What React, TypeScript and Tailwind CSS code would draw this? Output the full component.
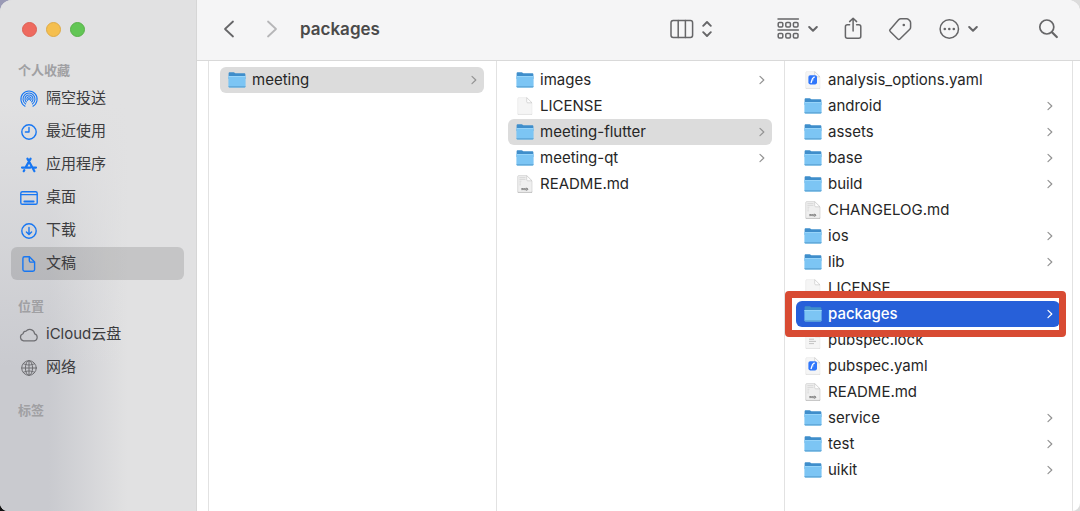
import type { ReactNode } from "react";
import clsx from "clsx";

type EntryKind = "folder" | "blank" | "markdown" | "dart" | "lock";

type Entry = {
  name: string;
  kind: EntryKind;
  state?: "path" | "active";
};

type Place = {
  label: string;
  icon: ReactNode;
  current?: boolean;
};

const COLUMNS: { label: string; entries: Entry[] }[] = [
  { label: "workspace", entries: [{ name: "meeting", kind: "folder", state: "path" }] },
  {
    label: "meeting",
    entries: [
      { name: "images", kind: "folder" },
      { name: "LICENSE", kind: "blank" },
      { name: "meeting-flutter", kind: "folder", state: "path" },
      { name: "meeting-qt", kind: "folder" },
      { name: "README.md", kind: "markdown" },
    ],
  },
  {
    label: "meeting-flutter",
    entries: [
      { name: "analysis_options.yaml", kind: "dart" },
      { name: "android", kind: "folder" },
      { name: "assets", kind: "folder" },
      { name: "base", kind: "folder" },
      { name: "build", kind: "folder" },
      { name: "CHANGELOG.md", kind: "markdown" },
      { name: "ios", kind: "folder" },
      { name: "lib", kind: "folder" },
      { name: "LICENSE", kind: "blank" },
      { name: "packages", kind: "folder", state: "active" },
      { name: "pubspec.lock", kind: "lock" },
      { name: "pubspec.yaml", kind: "dart" },
      { name: "README.md", kind: "markdown" },
      { name: "service", kind: "folder" },
      { name: "test", kind: "folder" },
      { name: "uikit", kind: "folder" },
    ],
  },
];

function Glyph({
  children,
  width = 20,
  height = 20,
  stroke = 1.4,
  className,
}: {
  children: ReactNode;
  width?: number;
  height?: number;
  stroke?: number;
  className?: string;
}) {
  return (
    <svg
      width={width}
      height={height}
      viewBox={`0 0 ${width} ${height}`}
      fill="none"
      stroke="currentColor"
      strokeWidth={stroke}
      strokeLinecap="round"
      strokeLinejoin="round"
      className={clsx("shrink-0", className)}
      aria-hidden="true"
    >
      {children}
    </svg>
  );
}

const FAVORITES: Place[] = [
  {
    label: "隔空投送",
    icon: (
      <Glyph stroke={1.1}>
        <path d="M6 17.2a8.1 8.1 0 1 1 8 0" />
        <path d="M6.6 15a6 6 0 1 1 6.8 0" />
        <path d="M7.4 13a4 4 0 1 1 5.2 0" />
        <path d="M8.6 11.4a2.1 2.1 0 1 1 2.8 0" />
        <circle cx="10" cy="10" r="1" fill="currentColor" stroke="none" />
      </Glyph>
    ),
  },
  {
    label: "最近使用",
    icon: (
      <Glyph>
        <circle cx="10" cy="10" r="7.2" />
        <path d="M10 5.4V10H6.4" />
      </Glyph>
    ),
  },
  {
    label: "应用程序",
    icon: (
      <Glyph stroke={2.2}>
        <path d="M8.4 3.6l5.8 10.4 1.2 2.2M11.6 3.6L6.7 12.4M3 12.6h8.4M14 12.6h3M4.7 16.2l.6-1.1" />
      </Glyph>
    ),
  },
  {
    label: "桌面",
    icon: (
      <Glyph>
        <rect x="1.8" y="3.7" width="16.4" height="12.6" rx="1.6" />
        <path d="M2 6.6h16" strokeWidth="1.1" />
        <path d="M5.4 13.6h9.2" strokeWidth="2" />
      </Glyph>
    ),
  },
  {
    label: "下载",
    icon: (
      <Glyph>
        <circle cx="10" cy="10" r="7.2" />
        <path d="M10 6.4v7M7.4 11l2.6 2.6 2.6-2.6" />
      </Glyph>
    ),
  },
  {
    label: "文稿",
    current: true,
    icon: (
      <Glyph>
        <path d="M5.6 2.8h4.8l5.2 5.3v7.5a1.7 1.7 0 0 1-1.7 1.7H5.6a1.7 1.7 0 0 1-1.7-1.7V4.5a1.7 1.7 0 0 1 1.7-1.7z" />
        <path d="M10.3 3v3.6a1.5 1.5 0 0 0 1.5 1.5h3.6" />
      </Glyph>
    ),
  },
];

const LOCATIONS: Place[] = [
  {
    label: "iCloud云盘",
    icon: (
      <Glyph stroke={1.2}>
        <path d="M4.6 15.8a3.6 3.6 0 0 1-.6-7 3.3 3.3 0 0 1 3-2.6 4.9 4.9 0 0 1 8.6 2.6 3.6 3.6 0 0 1-.4 7z" />
      </Glyph>
    ),
  },
  {
    label: "网络",
    icon: (
      <Glyph stroke={1}>
        <circle cx="10" cy="10" r="7.3" />
        <ellipse cx="10" cy="10" rx="3.6" ry="7.3" />
        <path d="M10 2.7v14.6M2.7 10h14.6M4.3 5.6c3.4 1.9 8 1.9 11.4 0M4.3 14.4c3.4-1.9 8-1.9 11.4 0" />
      </Glyph>
    ),
  },
];

function FolderIcon() {
  return (
    <svg width="18" height="18" viewBox="0 0 18 18" className="shrink-0" aria-hidden="true">
      <path d="M.6 2.5c0-.7.5-1.2 1.2-1.2h3.8c.6 0 .9.2 1.3.6l.5.4h8.8c.7 0 1.2.5 1.2 1.2V8H.6z" fill="#3f8ecb" />
      <path d="M.4 5h17.2v10.3c0 .7-.5 1.1-1.1 1.1h-15c-.6 0-1.1-.4-1.1-1.1z" fill="#7cc5f4" />
      <path d="M.4 5h17.2v.9H.4z" fill="#9ad6fa" />
      <path d="M.4 15.3h17.2c0 .8-.5 1.3-1.1 1.3h-15c-.6 0-1.1-.5-1.1-1.3z" fill="#5ba3d3" />
    </svg>
  );
}

function FileIcon({ kind }: { kind: EntryKind }) {
  const markdown = kind === "markdown";

  return (
    <svg width="18" height="18" viewBox="0 0 18 18" className="shrink-0" aria-hidden="true">
      <path d="M1.6 16.4h14.6v.5c0 .6-.4 1-1 1H2.6c-.6 0-1-.4-1-1z" fill={markdown ? "#b9b9b9" : "#dadada"} />
      <path
        d="M2.7.6h8l5.3 5.3v10.4c0 .6-.4 1-1 1H2.7c-.6 0-1-.4-1-1V1.6c0-.6.4-1 1-1z"
        fill={markdown ? "#efefef" : "#f5f5f5"}
        stroke={markdown ? "#cacaca" : "#e9e9e9"}
        strokeWidth=".6"
      />
      <path d="M10.7.6v4.2c0 .6.4 1 1 1H16z" fill="#fdfdfd" stroke="#c2c2c2" strokeWidth=".6" />
      {markdown && (
        <>
          <path d="M3.4 2.6h6M3.4 4.4h6M3.4 6.2h2M3.4 8h1.5M3.4 9.8h1.5" stroke="#d2d2d2" strokeWidth=".8" />
          <path d="M6 15.2v-2l1.1 1.3 1.1-1.3v2M9.8 13.3v1.8h.8c1.6 0 1.6-1.8 0-1.8z" fill="none" stroke="#555" strokeWidth=".8" />
        </>
      )}
      {kind === "dart" && (
        <>
          <rect x="4.4" y="4.2" width="8.6" height="9.2" rx="1.8" fill="#2f76fb" />
          <path d="M10.6 5.8L8.5 7.6 7 12" stroke="#fff" strokeWidth="1.3" fill="none" />
          <path d="M8.3 8.8l1.6-.5-1 2" fill="#a9caff" />
        </>
      )}
      {kind === "lock" && <path d="M5 8.2h5M5 10.4h7M5 12.6h5" stroke="#b5b5b5" strokeWidth=".8" />}
    </svg>
  );
}

function EntryRow({ entry }: { entry: Entry }) {
  const active = entry.state === "active";

  return (
    <li className="relative">
      <button
        type="button"
        className={clsx(
          "flex h-[26px] w-full items-center gap-1.5 rounded-md pr-[7px] pl-2 text-left text-[15px] leading-5",
          active ? "bg-[#2760d9] font-medium text-white" : "text-[#262626]",
          entry.state === "path" && "bg-[#dcdcdc]"
        )}
      >
        {entry.kind === "folder" ? <FolderIcon /> : <FileIcon kind={entry.kind} />}
        <span className="min-w-0 flex-1 truncate">{entry.name}</span>
        {entry.kind === "folder" && (
          <Glyph width={6} height={10} stroke={1.2} className={active ? "text-white" : "text-[#939393]"}>
            <path d="M1 1.4L4.8 5 1 8.6" />
          </Glyph>
        )}
      </button>
      {/* callout around the selected folder, filled above and below the row */}
      {active && (
        <>
          <span className="pointer-events-none absolute inset-x-0 -top-1 h-1 bg-white" />
          <span className="pointer-events-none absolute inset-x-0 -bottom-1 h-1 bg-white" />
          <span className="pointer-events-none absolute -top-[10px] -right-[6px] -bottom-[10px] -left-[11px] z-10 rounded-sm border-[7px] border-[#d84b33]" />
        </>
      )}
    </li>
  );
}

function SidebarSection({ title, places, tint }: { title: string; places: Place[]; tint: string }) {
  return (
    <section className="mb-4">
      <h2 className="flex h-[22px] items-center pl-[7px] text-[13px] font-bold text-[#a0a0a3]">{title}</h2>
      <ul>
        {places.map((place) => (
          <li key={place.label}>
            <a
              href="#"
              aria-current={place.current ? "page" : undefined}
              className={clsx(
                "flex h-[33px] items-center gap-[7px] rounded-md pl-2 text-[15px] text-[#3c3c3e]",
                place.current && "bg-black/12"
              )}
            >
              <span className={tint}>{place.icon}</span>
              {place.label}
            </a>
          </li>
        ))}
      </ul>
    </section>
  );
}

function Sidebar() {
  return (
    <aside className="w-[197px] shrink-0 border-r border-[#d6d6d6] bg-[linear-gradient(to_bottom,#e1e1e2_20%,transparent_72%),linear-gradient(to_right,#c9cacf_25%,#e1e1e2_65%)] pr-3 pl-[11px]">
      <div className="flex h-[60px] items-start gap-[9px] pt-[22px] pl-[11px]">
        <button type="button" aria-label="关闭" className="size-[15px] rounded-full border border-[#dd6054] bg-[#ee6a5f]" />
        <button type="button" aria-label="最小化" className="size-[15px] rounded-full border border-[#deaa46] bg-[#f5bf4f]" />
        <button type="button" aria-label="缩放" className="size-[15px] rounded-full border border-[#58b149] bg-[#62c655]" />
      </div>
      <nav>
        <SidebarSection title="个人收藏" places={FAVORITES} tint="text-[#1877f2]" />
        <SidebarSection title="位置" places={LOCATIONS} tint="text-[#6e6e72]" />
        <SidebarSection title="标签" places={[]} tint="text-[#6e6e72]" />
      </nav>
    </aside>
  );
}

function SmallChevron() {
  return (
    <Glyph width={10} height={8} stroke={2}>
      <path d="M1.2 2L5 5.8 8.8 2" />
    </Glyph>
  );
}

function Toolbar() {
  return (
    <header className="flex h-[61px] items-center border-b border-[#d9d9d9] bg-[#f5f5f6] pr-[22px] pb-[3px] pl-[26px] text-[#666668]">
      <div className="flex items-center gap-[31px]">
        <button type="button" aria-label="后退">
          <Glyph width={12} height={20} stroke={1.8}>
            <path d="M10 2.5L2 10l8 7.5" />
          </Glyph>
        </button>
        <button type="button" aria-label="前进" className="text-[#b6b6b8]">
          <Glyph width={12} height={20} stroke={1.8}>
            <path d="M2 2.5l8 7.5-8 7.5" />
          </Glyph>
        </button>
      </div>
      <h1 className="ml-[22px] text-[17px] leading-6 font-semibold text-[#4a4a4a]">packages</h1>

      <div className="ml-auto flex items-center">
        <button type="button" aria-label="显示方式" className="mr-16 flex items-center gap-2">
          <Glyph width={24} height={22} stroke={1.5}>
            <rect x="1" y="2.6" width="21.6" height="16.8" rx="2.2" />
            <path d="M8.2 2.6v16.8M15.4 2.6v16.8" />
          </Glyph>
          <Glyph width={10} height={20} stroke={1.9}>
            <path d="M1.2 6.8L5 3l3.8 3.8M1.2 13.2L5 17l3.8-3.8" />
          </Glyph>
        </button>
        <button type="button" aria-label="分组" className="mr-6 flex items-center gap-2">
          <Glyph width={24} height={24} stroke={1.5}>
            <path d="M2 2h20.4M2 13h20.4" />
            <rect x="2.2" y="5.4" width="4.6" height="4.6" rx="1.2" />
            <rect x="9.8" y="5.4" width="4.6" height="4.6" rx="1.2" />
            <rect x="17.4" y="5.4" width="4.6" height="4.6" rx="1.2" />
            <rect x="2.2" y="16.4" width="4.6" height="4.6" rx="1.2" />
            <rect x="9.8" y="16.4" width="4.6" height="4.6" rx="1.2" />
            <rect x="17.4" y="16.4" width="4.6" height="4.6" rx="1.2" />
          </Glyph>
          <SmallChevron />
        </button>
        <button type="button" aria-label="共享" className="mr-6">
          <Glyph width={22} height={24} stroke={1.5}>
            <path d="M7.6 7.8H5.4a2 2 0 0 0-2 2v9.4a2 2 0 0 0 2 2h11.4a2 2 0 0 0 2-2V9.8a2 2 0 0 0-2-2h-2.2" />
            <path d="M11.1 14V1.4M7.6 4.6l3.5-3.4 3.5 3.4" />
          </Glyph>
        </button>
        <button type="button" aria-label="标签" className="mr-[26px]">
          <Glyph width={24} height={24} stroke={1.5}>
            <path d="M12.8 1.8h5.8c1 0 1.6.3 2.2.9l.9.9c.6.6.9 1.2.9 2.1v4.6c0 .9-.2 1.4-.8 2l-9.9 9.7c-.7.7-1.4.7-2.1 0l-7.6-7.5c-.7-.7-.7-1.4 0-2.1l8.6-9.8c.6-.6 1.1-.8 2-.8z" />
            <circle cx="15.8" cy="8" r="1.3" fill="currentColor" stroke="none" />
          </Glyph>
        </button>
        <button type="button" aria-label="更多" className="mr-[60px] flex items-center gap-2">
          <Glyph width={22} height={22} stroke={1.5}>
            <circle cx="11.3" cy="11" r="9.2" />
            <g fill="currentColor" stroke="none">
              <circle cx="6.8" cy="11" r="1.3" />
              <circle cx="11.3" cy="11" r="1.3" />
              <circle cx="15.8" cy="11" r="1.3" />
            </g>
          </Glyph>
          <SmallChevron />
        </button>
        <button type="button" aria-label="搜索">
          <Glyph width={20} height={20} stroke={1.7}>
            <circle cx="8.8" cy="8" r="7" />
            <path d="M14 13.2l4.8 4.8" strokeWidth="2.2" />
          </Glyph>
        </button>
      </div>
    </header>
  );
}

export default function App() {
  return (
    <div className="bg-[linear-gradient(to_right,transparent,#dcdcdc),linear-gradient(to_bottom,#9a9ab5_20%,#111_80%)] font-['Inter','Noto_Sans_CJK_SC',sans-serif]">
      <div className="flex min-h-screen overflow-hidden rounded-t-xl rounded-b-lg bg-white">
        <Sidebar />
        <main className="flex min-w-0 flex-1 flex-col">
          <Toolbar />
          <div className="flex flex-1 pl-[11px]">
            {COLUMNS.map((column) => (
              <ul
                key={column.label}
                aria-label={column.label}
                className="min-w-0 flex-1 border-l border-[#e2e2e2] pt-1.5 pr-3 pl-[11px]"
              >
                {column.entries.map((entry) => (
                  <EntryRow key={entry.name} entry={entry} />
                ))}
              </ul>
            ))}
            <div className="w-2 border-l border-[#e2e2e2]" />
          </div>
        </main>
      </div>
    </div>
  );
}
